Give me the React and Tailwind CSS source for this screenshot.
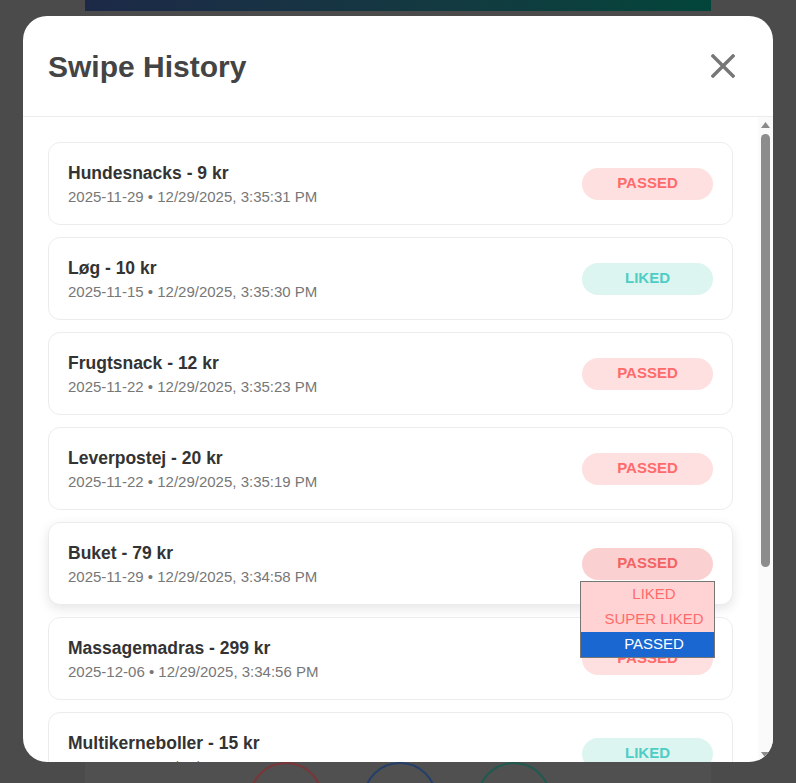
import React from 'react';

const items = [
  { name: 'Hundesnacks', price: 9, date: '2025-11-29', time: '12/29/2025, 3:35:31 PM', status: 'PASSED' },
  { name: 'Løg', price: 10, date: '2025-11-15', time: '12/29/2025, 3:35:30 PM', status: 'LIKED' },
  { name: 'Frugtsnack', price: 12, date: '2025-11-22', time: '12/29/2025, 3:35:23 PM', status: 'PASSED' },
  { name: 'Leverpostej', price: 20, date: '2025-11-22', time: '12/29/2025, 3:35:19 PM', status: 'PASSED' },
  { name: 'Buket', price: 79, date: '2025-11-29', time: '12/29/2025, 3:34:58 PM', status: 'PASSED', open: true },
  { name: 'Massagemadras', price: 299, date: '2025-12-06', time: '12/29/2025, 3:34:56 PM', status: 'PASSED' },
  { name: 'Multikerneboller', price: 15, date: '2025-11-29', time: '12/29/2025, 3:34:51 PM', status: 'LIKED' },
];

const Badge = ({ status, open }) => {
  const liked = status === 'LIKED';
  return (
    <div className="relative">
      <div
        className={
          'w-[131px] h-8 rounded-full flex items-center justify-center text-[15px] font-bold ' +
          (liked
            ? 'bg-[#dcf5f1] text-[#4ecdc4]'
            : open
            ? 'bg-[#fbd0d0] text-[#f26464]'
            : 'bg-[#ffe0e0] text-[#ff6b6b]')
        }
      >
        {status}
      </div>
      {open && (
        <div className="absolute left-[-2px] top-[33px] w-[135px] border border-[#767676] bg-[#ffd3d3] text-[15px] z-10">
          <div className="h-[25px] pl-[13px] flex items-center justify-center text-[#ff6b6b]">LIKED</div>
          <div className="h-[25px] pl-[13px] flex items-center justify-center text-[#ff6b6b]">SUPER LIKED</div>
          <div className="h-[25px] pl-[13px] flex items-center justify-center bg-[#1a67d2] text-white">PASSED</div>
        </div>
      )}
    </div>
  );
};

const App = () => {
  return (
    <div className="relative w-[796px] h-[783px] overflow-hidden bg-[#4b4b4b] font-['Liberation_Sans',Arial,sans-serif]">
      {/* page behind the overlay */}
      <div className="w-[626px] mx-auto h-full flex flex-col">
        <div className="h-[11px] bg-gradient-to-r from-[#1c2947] to-[#02453a]" />
        <div className="flex-1" />
        <div className="h-[21px] bg-[#505050] flex justify-center gap-10 pl-[3px]">
          <div className="w-[74px] h-[74px] rounded-full border-2 border-[#7a3538] shrink-0" />
          <div className="w-[74px] h-[74px] rounded-full border-2 border-[#253f6b] shrink-0" />
          <div className="w-[74px] h-[74px] rounded-full border-2 border-[#1f5a4f] shrink-0" />
        </div>
      </div>

      {/* modal */}
      <div className="absolute left-[23px] top-[16px] w-[750px] h-[746px] bg-white rounded-[24px] overflow-hidden flex flex-col">
        <div className="h-[101px] shrink-0 border-b border-[#ececec] flex items-center justify-between pl-[25px] pr-[38px]">
          <h2 className="text-[30px] font-bold text-[#444]">Swipe History</h2>
          <svg width="24" height="24" viewBox="0 0 24 24" className="text-[#777]">
            <path d="M2 2L22 22M22 2L2 22" stroke="currentColor" strokeWidth="3.4" strokeLinecap="square" />
          </svg>
        </div>
        <div className="flex-1 min-h-0 flex">
          <div className="flex-1 overflow-hidden pl-[25px] pr-[25px] pt-[25px]">
            <div className="flex flex-col gap-3">
              {items.map((it) => (
                <div
                  key={it.name}
                  className={
                    'h-[83px] shrink-0 rounded-xl border border-[#ececec] bg-white flex items-center justify-between px-[19px] ' +
                    (it.open ? 'shadow-[0_4px_12px_rgba(0,0,0,0.1)]' : '')
                  }
                >
                  <div className="flex flex-col">
                    <div className="text-[17.5px] leading-[22px] font-bold text-[#333]">
                      {it.name} - {it.price} kr
                    </div>
                    <div className="mt-[4px] text-[15px] leading-[18px] text-[#777]">
                      {it.date} • {it.time}
                    </div>
                  </div>
                  <Badge status={it.status} open={it.open} />
                </div>
              ))}
            </div>
          </div>
          {/* scrollbar */}
          <div className="w-[15px] shrink-0 bg-[#fafafa] flex flex-col items-center">
            <div className="h-[15px] flex items-center justify-center">
              <svg width="9" height="6" viewBox="0 0 9 6">
                <path d="M4.5 0L9 6H0Z" fill="#8a8a8a" />
              </svg>
            </div>
            <div className="mt-[2px] w-[9px] h-[433px] rounded-[5px] bg-[#8c8c8c]" />
            <div className="flex-1" />
            <div className="h-[15px] flex items-center justify-center">
              <svg width="9" height="6" viewBox="0 0 9 6">
                <path d="M0 0H9L4.5 6Z" fill="#8a8a8a" />
              </svg>
            </div>
          </div>
        </div>
      </div>
    </div>
  );
};

export default App;
